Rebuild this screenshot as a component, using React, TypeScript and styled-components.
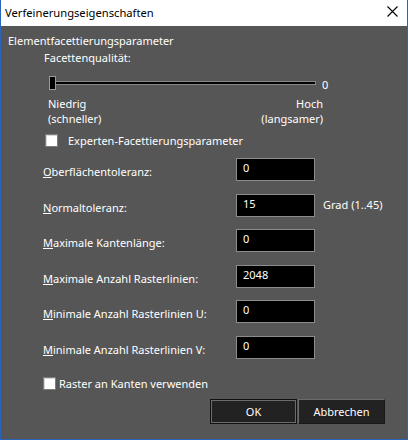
import React from "react";
import styled, { createGlobalStyle } from "styled-components";

const GlobalStyle = createGlobalStyle`
  html, body {
    margin: 0;
    padding: 0;
    background: #565656;
  }
  * {
    box-sizing: border-box;
  }
`;

const FONT = `"Noto Sans", "Open Sans", "DejaVu Sans", sans-serif`;

type Field = { label: string; key: string; rest: string; value: string; unit?: string };

const fields: Field[] = [
  { label: "Oberflächentoleranz:", key: "O", rest: "berflächentoleranz:", value: "0" },
  { label: "Normaltoleranz:", key: "N", rest: "ormaltoleranz:", value: "15", unit: "Grad (1..45)" },
  { label: "Maximale Kantenlänge:", key: "M", rest: "aximale Kantenlänge:", value: "0" },
  { label: "Maximale Anzahl Rasterlinien:", key: "M", rest: "aximale Anzahl Rasterlinien:", value: "2048" },
  { label: "Minimale Anzahl Rasterlinien U:", key: "M", rest: "inimale Anzahl Rasterlinien U:", value: "0" },
  { label: "Minimale Anzahl Rasterlinien V:", key: "M", rest: "inimale Anzahl Rasterlinien V:", value: "0" },
];

export default function App() {
  return (
    <>
      <GlobalStyle />
      <Window>
        <TitleBar>
          <Title>Verfeinerungseigenschaften</Title>
          <CloseButton>
            <svg width="11" height="11" viewBox="0 0 11 11">
              <path d="M0.5 0.5 L10.5 10.5 M10.5 0.5 L0.5 10.5" stroke="#000" strokeWidth="1.1" />
            </svg>
          </CloseButton>
        </TitleBar>
        <Body>
          <GroupTitle>Elementfacettierungsparameter</GroupTitle>
          <Quality>
            <Text>Facettenqualität:</Text>
            <SliderRow>
              <SliderArea>
                <Track />
                <Thumb />
              </SliderArea>
              <SliderValue>0</SliderValue>
            </SliderRow>
            <ScaleLabels>
              <ScaleLabel>
                Niedrig
                <br />
                (schneller)
              </ScaleLabel>
              <ScaleLabel $right>
                Hoch
                <br />
                (langsamer)
              </ScaleLabel>
            </ScaleLabels>
            <CheckRow $gap={10} $top={7}>
              <CheckBox />
              <Text>Experten-Facettierungsparameter</Text>
            </CheckRow>
          </Quality>
          <Fields>
            {fields.map((f) => (
              <FieldRow key={f.label}>
                <FieldLabel>
                  <u>{f.key}</u>
                  {f.rest}
                </FieldLabel>
                <Input>{f.value}</Input>
                {f.unit && <Unit>{f.unit}</Unit>}
              </FieldRow>
            ))}
          </Fields>
          <CheckRow $gap={3} $indent={35} $top={17}>
            <CheckBox />
            <Text>Raster an Kanten verwenden</Text>
          </CheckRow>
          <Buttons>
            <Button $default>OK</Button>
            <Button>Abbrechen</Button>
          </Buttons>
        </Body>
      </Window>
    </>
  );
}

const Window = styled.div`
  width: 408px;
  height: 440px;
  display: flex;
  flex-direction: column;
  border: 1px solid #2b63b8;
  border-top: none;
  font-family: ${FONT};
  font-size: 11px;
  color: #ffffff;
`;

const TitleBar = styled.div`
  height: 26px;
  background: #ffffff;
  display: flex;
  align-items: center;
  justify-content: space-between;
  padding: 0 9px 0 4px;
  flex-shrink: 0;
`;

const Title = styled.div`
  color: #000000;
  font-size: 11.2px;
  line-height: 16px;
  margin-top: -1px;
`;

const CloseButton = styled.div`
  width: 11px;
  height: 11px;
  display: flex;
  margin-top: -3px;
`;

const Body = styled.div`
  flex: 1;
  background: #565656;
  padding: 6px 0 0 7px;
  display: flex;
  flex-direction: column;
`;

const Text = styled.div`
  line-height: 15px;
  white-space: nowrap;
`;

const GroupTitle = styled(Text)`
  margin-top: 1px;
`;

const Quality = styled.div`
  margin-left: 36px;
  margin-top: 2px;
  display: flex;
  flex-direction: column;
`;

const SliderRow = styled.div`
  display: flex;
  align-items: center;
  margin-top: 10px;
  height: 16px;
`;

const SliderArea = styled.div`
  position: relative;
  width: 272px;
  height: 14px;
`;

const Track = styled.div`
  position: absolute;
  left: 5px;
  right: 0;
  top: 5px;
  height: 4px;
  background: #000000;
  border: 1px solid #8a8a8a;
`;

const Thumb = styled.div`
  position: absolute;
  left: 5px;
  top: 0;
  width: 7px;
  height: 14px;
  background: #000000;
  border: 1px solid #9a9a9a;
`;

const SliderValue = styled.div`
  margin-left: 6px;
  margin-top: 2px;
  line-height: 15px;
`;

const ScaleLabels = styled.div`
  width: 279px;
  display: flex;
  justify-content: space-between;
  margin-top: 5px;
  padding-left: 4px;
`;

const ScaleLabel = styled.div<{ $right?: boolean }>`
  line-height: 15px;
  text-align: ${(p) => (p.$right ? "right" : "left")};
`;

const CheckRow = styled.div<{ $gap: number; $indent?: number; $top: number }>`
  display: flex;
  align-items: center;
  gap: ${(p) => p.$gap}px;
  margin-left: ${(p) => p.$indent ?? 1}px;
  margin-top: ${(p) => p.$top}px;
`;

const CheckBox = styled.div`
  width: 13px;
  height: 13px;
  background: #ffffff;
  border: 1px solid #7d7d7d;
  box-shadow: inset 1px 1px 0 #d8d8d8;
  flex-shrink: 0;
`;

const Fields = styled.div`
  display: flex;
  flex-direction: column;
  gap: 12.6px;
  margin-top: 10px;
  margin-left: 35px;
`;

const FieldRow = styled.div`
  display: flex;
  align-items: center;
  height: 23px;
`;

const FieldLabel = styled.div`
  width: 193px;
  line-height: 15px;
  margin-top: 4px;
  white-space: nowrap;
`;

const Input = styled.div`
  width: 79px;
  height: 23px;
  background: #000000;
  border: 1px solid #8c8c8c;
  padding: 1px 0 0 6px;
  line-height: 15px;
`;

const Unit = styled.div`
  margin-left: 8px;
  line-height: 15px;
  margin-top: -2px;
`;

const Buttons = styled.div`
  display: flex;
  justify-content: flex-end;
  gap: 1px;
  margin-top: 8px;
  padding-right: 22px;
`;

const Button = styled.div<{ $default?: boolean }>`
  width: 87px;
  height: 25px;
  background: #222222;
  display: flex;
  align-items: center;
  justify-content: center;
  line-height: 15px;
  border: 1px solid ${(p) => (p.$default ? "#111111" : "#6c6c6c")};
  border-right-color: ${(p) => (p.$default ? "#111111" : "#1a1a1a")};
  border-bottom-color: ${(p) => (p.$default ? "#111111" : "#1a1a1a")};
  box-shadow: ${(p) => (p.$default ? "inset 0 0 0 1px #6c6c6c" : "none")};
`;
